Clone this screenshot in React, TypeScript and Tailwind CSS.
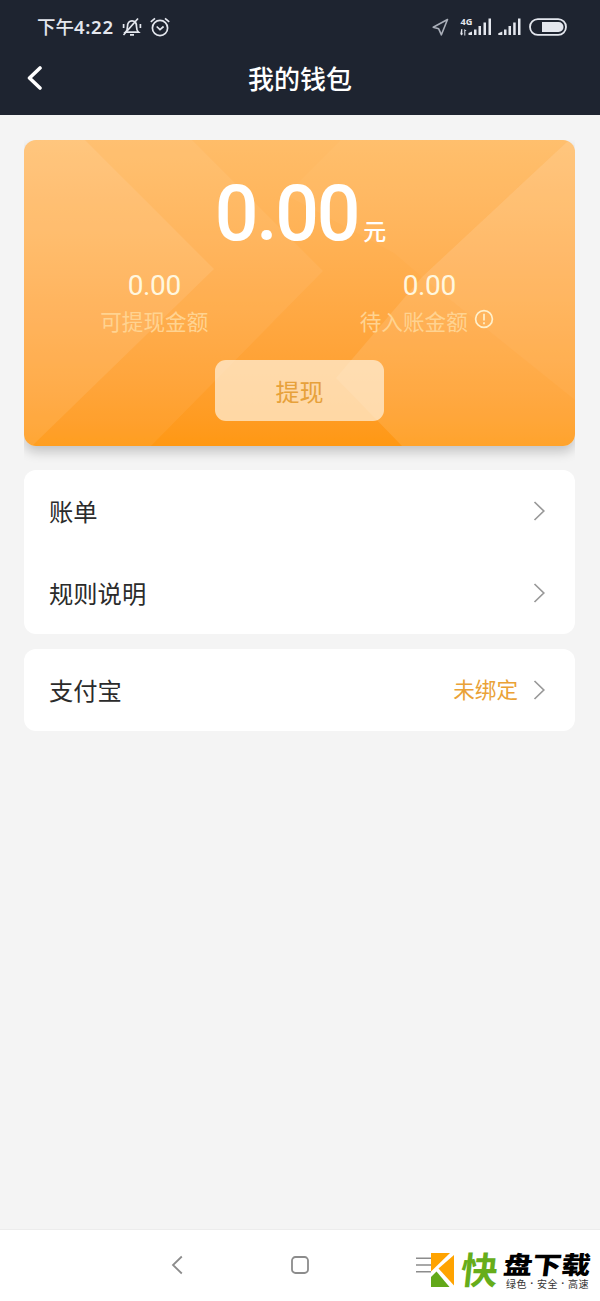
import type { ReactNode } from 'react';

const StatusBar = () => (
  <div className="h-[42px] pt-[12px] pl-[37px] pr-[33px] flex items-start justify-between text-[#e4e7ee]">
    <div className="h-[30px] flex items-center">
      <span className="w-[85px] whitespace-nowrap text-[18.5px] leading-[30px] font-medium font-['Noto_Sans','Noto_Sans_CJK_SC',sans-serif]">
        下午<span className="font-semibold tracking-[0.7px]">4:22</span>
      </span>
      <svg className="w-5 h-5" viewBox="0 0 20 20" fill="none" stroke="currentColor" strokeWidth="1.7">
        <path d="M3.500 15.200c1.600-1.400 2-3.200 2-5.800 0-3.400 1.800-5.600 4.500-5.600s4.500 2.200 4.500 5.600c0 2.600.4 4.400 2 5.800z" />
        <path d="M1.500 18 16 1.500" />
        <path d="M8 17.800h4M1.600 7v4M18.400 7v4" />
      </svg>
      <svg className="ml-[8px] w-5 h-5" viewBox="0 0 20 20" fill="none" stroke="currentColor" strokeWidth="1.7">
        <circle cx="10" cy="11" r="7.600" />
        <path d="m6.700 9.500 3.300 3.100 3.600-3.100" />
        <path d="M.8 4.800 5 1.300M19.200 4.800 15 1.300" />
      </svg>
    </div>
    <div className="h-[30px] flex items-center">
      <svg className="w-[17px] h-[18px]" viewBox="0 0 17 18" fill="none" stroke="#a9aeb8" strokeWidth="1.600" strokeLinejoin="round">
        <path d="M15.500 1.500 1.200 9.200l5.500 1.600 2.700 6z" />
      </svg>
      <svg className="ml-[11px] w-[32px] h-[28px]" viewBox="0 -4 32 28" fill="currentColor">
        <text x="0.500" y="7.500" fontSize="9.200" fontWeight="700" fontFamily="Noto Sans, sans-serif">4G</text>
        <path d="M1.300 12h1v4.500h1L1.500 18.500.3 17zM4.300 18.500h1V14h1.300l-2.300-2z" />
        <path d="M8.500 18v-2l3.500-1.500V18zM14 12.500h2.500V18H14zM18.500 9H21v9h-2.500zM23.500 5.500H26V18h-2.500zM28.500 1.500H31V18h-2.500z" />
      </svg>
      <svg className="ml-[6px] w-[24px] h-[20px]" viewBox="0 0 24 20" fill="currentColor">
        <path d="M.3 18v-1.800l4-1.700V18zM6 12.500h2.500V18H6zM10.500 9H13v9h-2.500zM15.200 5.500h2.500V18h-2.500zM20 1.500h2.500V18H20z" />
      </svg>
      <svg className="ml-[7px] w-[38px] h-[18px]" viewBox="0 0 38 18">
        <rect x="1" y="1.200" width="36" height="15.600" rx="7.800" fill="none" stroke="currentColor" strokeWidth="1.800" />
        <path d="M13 4h16.500a5 5 0 0 1 0 10H13z" fill="currentColor" />
      </svg>
    </div>
  </div>
);

const Header = () => (
  <header className="h-[115px] bg-[#1e2430]">
    <StatusBar />
    <div className="h-[71px] grid grid-cols-[100px_1fr_100px] items-center text-white">
      <svg className="ml-[26px] w-4 h-[26px]" viewBox="0 0 16 26" fill="none" stroke="currentColor" strokeWidth="3.600" strokeLinecap="round" strokeLinejoin="round">
        <path d="M14 3 3.500 13 14 23" />
      </svg>
      <h1 className="text-center text-[26px] leading-[40px] font-medium">我的钱包</h1>
    </div>
  </header>
);

// Translucent facets behind the balance
const CardPattern = () => (
  <svg className="absolute inset-0 w-full h-full" viewBox="0 0 551 306" preserveAspectRatio="none" fill="#fff">
    <path d="M0 0h61l129 129L8 306H0z" opacity=".09" />
    <path d="M0 0h168l131 131-172 175H0z" opacity=".06" />
    <path d="M545 0h6v306H378l-66-68 86-101z" opacity=".11" />
    <path d="M317 0 262 55l108 58 28 24L545 0z" opacity=".03" />
    <path d="M545 0h6v260L398 137z" opacity=".04" />
  </svg>
);

const BalanceCard = () => (
  <section className="relative h-[306px] rounded-[12px] overflow-hidden bg-linear-to-b from-[#ffbd69] to-[#ff9812]">
    <CardPattern />
    <div className="relative flex flex-col items-center">
      <div className="mt-[29px] h-[90px] pl-[2px] flex items-baseline text-white">
        <span className="text-[77px] leading-[90px] font-medium tracking-[-2.300px] font-['Roboto',sans-serif]">0.00</span>
        <span className="ml-[5px] text-[23px] leading-[30px] font-medium">元</span>
      </div>
      <div className="w-full grid grid-cols-2 text-center text-[#fff7df]">
        <div className="pr-[15px]">
          <div className="mt-[10px] text-[28px] leading-[34px] tracking-[-0.4px] font-['Roboto',sans-serif]">0.00</div>
          <div className="mt-[1px] text-[21.600px] leading-[34px] text-[#ffd391]">可提现金额</div>
        </div>
        <div className="pr-[16px]">
          <div className="mt-[10px] text-[28px] leading-[34px] tracking-[-0.4px] font-['Roboto',sans-serif]">0.00</div>
          <div className="mt-[1px] flex items-center justify-center text-[21.600px] leading-[34px] text-[#ffd391]">
            待入账金额
            <svg className="ml-[6px] mr-[5px] mb-[5px] w-5 h-5" viewBox="0 0 20 20" fill="none" stroke="#fff0cb" strokeWidth="1.700">
              <circle cx="10" cy="10" r="8.400" />
              <path d="M10 4.800v6.700M10 13.300v2" />
            </svg>
          </div>
        </div>
      </div>
      <button className="mt-[22px] w-[169px] h-[61px] rounded-[11px] bg-[#fff2dd]/70 text-[24px] leading-[61px] text-[#e7a13a]">
        提现
      </button>
    </div>
  </section>
);

const Chevron = () => (
  <svg className="w-3 h-5" viewBox="0 0 12 20" fill="none" stroke="#999" strokeWidth="1.700">
    <path d="m1.500 1 9.300 9-9.300 9" />
  </svg>
);

const Row = ({ label, children }: { label: string; children?: ReactNode }) => (
  <div className="h-[82px] pl-[25px] pr-[30px] flex items-center justify-between text-[24.300px] text-[#2b2b2b]">
    <span>{label}</span>
    <div className="flex items-center gap-[15px]">
      {children}
      <Chevron />
    </div>
  </div>
);

const NavBar = () => (
  <nav className="h-[72px] pb-[2px] bg-white border-t border-[#ececec] flex items-center justify-between pl-[171px] pr-[168px] text-[#8c8c8c]">
    <svg className="w-3 h-5" viewBox="0 0 12 20" fill="none" stroke="currentColor" strokeWidth="1.800">
      <path d="M10.800 1.500 2 10l8.800 8.500" />
    </svg>
    <svg className="w-[18px] h-[18px]" viewBox="0 0 18 18" fill="none" stroke="currentColor" strokeWidth="1.800">
      <rect x="1" y="1" width="16" height="16" rx="3.500" />
    </svg>
    <svg className="w-4 h-4" viewBox="0 0 16 16" fill="none" stroke="currentColor" strokeWidth="1.600">
      <path d="M0 1.200h16M0 8h16M0 14.800h16" />
    </svg>
  </nav>
);

const Dot = () => <span className="w-[10px] text-center font-bold font-['Roboto',sans-serif]">·</span>;

const DownloadBadge = () => (
  <div className="absolute left-[431px] top-[1247px] h-[48px] flex">
    <svg className="mt-[6px] w-[23px] h-[34px]" viewBox="0 0 23 34">
      <path d="M0 0h23v34H0z" fill="#fff" />
      <path d="M0 0h19L0 18.500z" fill="#ffa300" />
      <path d="M23 2v30.500L7.500 15.500z" fill="#ffa300" />
      <path d="m5.500 18.500 13 15.500H0V24z" fill="#62a819" />
    </svg>
    <span className="mt-[-2px] ml-[7px] w-[39px] text-[37px] leading-[46px] font-bold text-[#66ad1b] -skew-x-6">快</span>
    <div className="ml-[4px]">
      <div className="whitespace-nowrap text-[29px] leading-[32px] h-[31px] font-black text-black -skew-x-6 scale-y-85">盘下载</div>
      <div className="ml-[2px] flex whitespace-nowrap text-[10px] leading-[12px] tracking-[0.500px] text-[#333]">
        绿色
        <Dot />
        安全
        <Dot />
        高速
      </div>
    </div>
  </div>
);

export default function App() {
  return (
    <div className="relative w-[600px] h-[1301px] flex flex-col overflow-hidden bg-[#f4f4f4] font-['Noto_Sans_CJK_SC',sans-serif]">
      <Header />
      <main className="flex-1 pt-[25px] pl-[24px] pr-[25px]">
        <div className="pb-[24px] overflow-hidden">
          <div className="rounded-[12px] shadow-[0_6px_12px_rgba(0,0,0,0.2)]">
            <BalanceCard />
          </div>
        </div>
        <div className="rounded-[12px] bg-white">
          <Row label="账单" />
          <Row label="规则说明" />
        </div>
        <div className="mt-[15px] rounded-[12px] bg-white">
          <Row label="支付宝">
            <span className="text-[21.600px] leading-[30px] pb-[2px] text-[#eaa236]">未绑定</span>
          </Row>
        </div>
      </main>
      <NavBar />
      <DownloadBadge />
    </div>
  );
}
